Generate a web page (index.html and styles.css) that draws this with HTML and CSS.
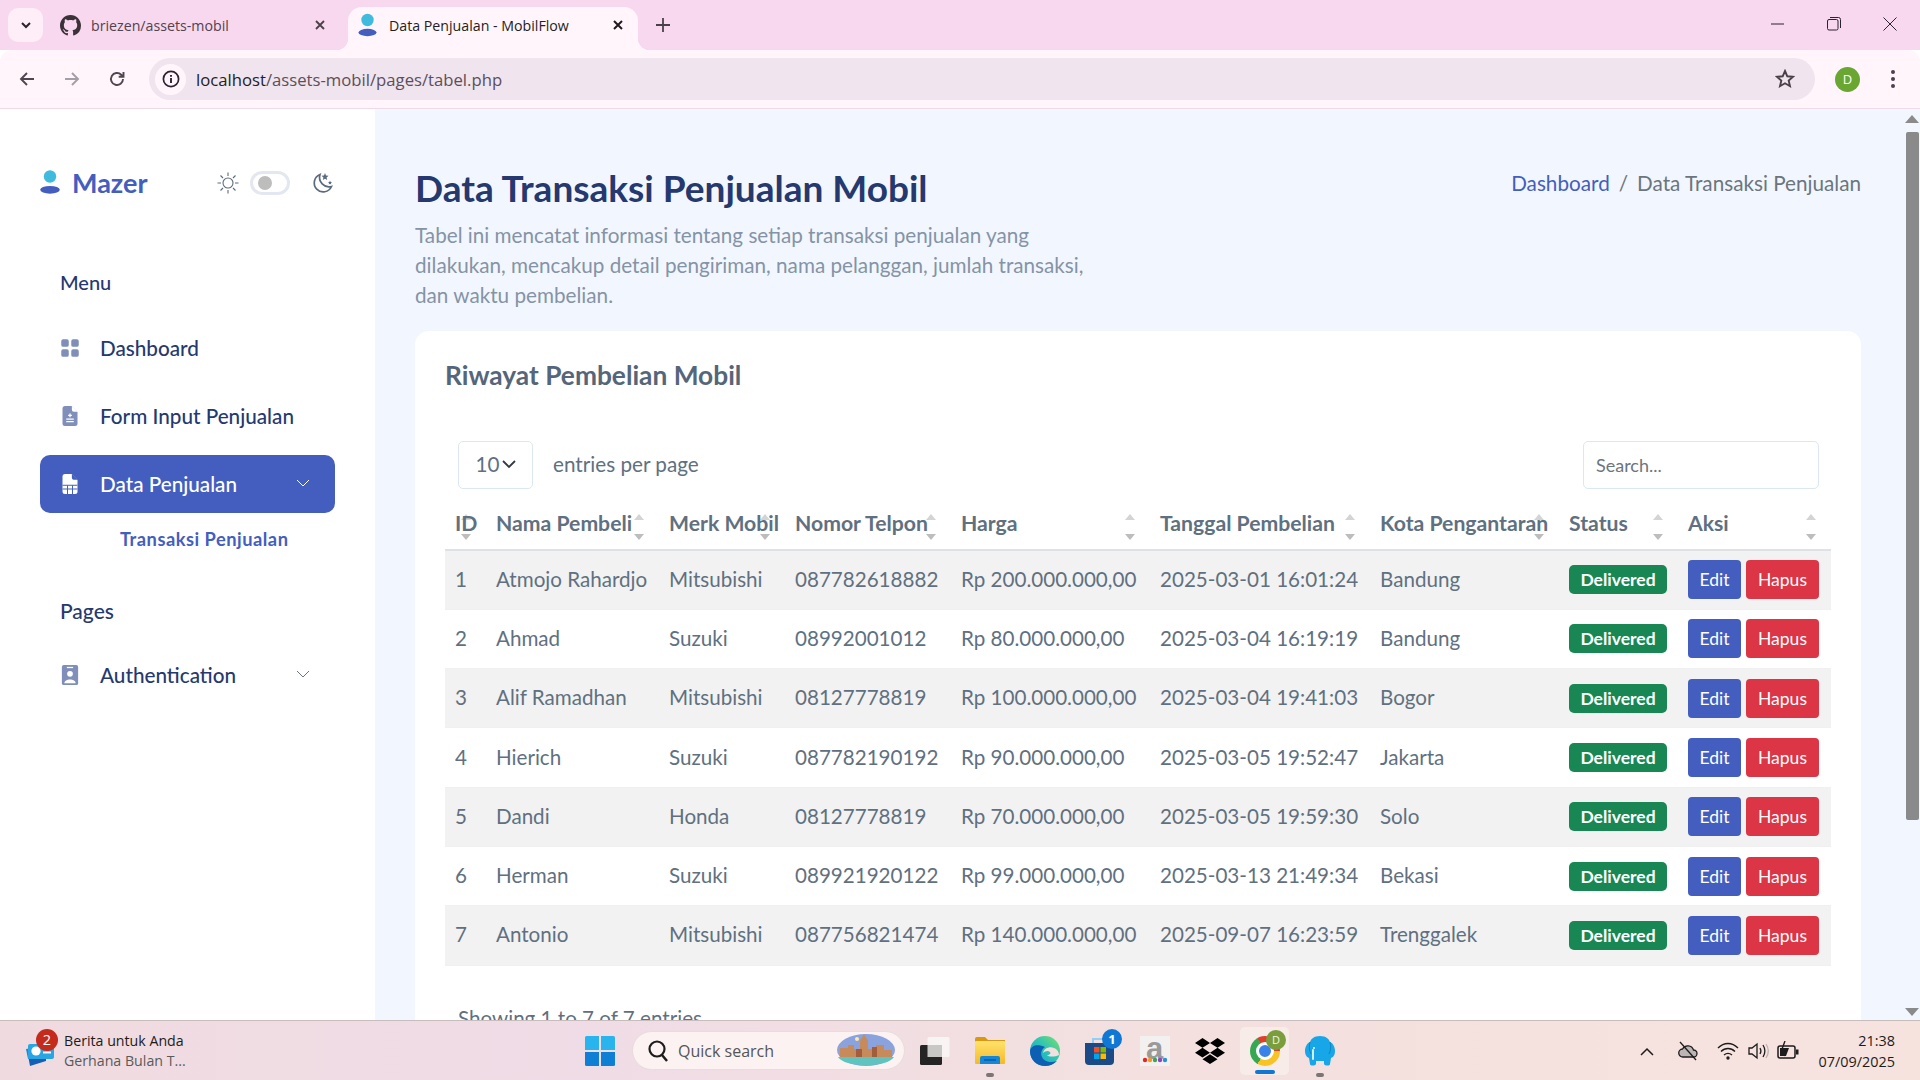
FILE: index.html
```html
<!DOCTYPE html>
<html lang="en">
<head>
  <meta charset="UTF-8">
  <title>Data Penjualan - MobilFlow</title>
  <link rel="stylesheet" href="styles.css">
</head>
<body>
  <div class="screen">
    <!-- browser chrome -->
    <div class="tabstrip">
      <button class="tab-search"><svg width="14" height="14" viewBox="0 0 14 14"><path d="M3 5l4 4 4-4" fill="none" stroke="#2b2330" stroke-width="2"/></svg></button>
      <div class="tab">
        <svg class="tab-icon" width="21" height="21" viewBox="0 0 16 16"><path fill="#3a3238" d="M8 0C3.58 0 0 3.58 0 8c0 3.54 2.29 6.53 5.47 7.59.4.07.55-.17.55-.38 0-.19-.01-.82-.01-1.49-2.01.37-2.53-.49-2.69-.94-.09-.23-.48-.94-.82-1.13-.28-.15-.68-.52-.01-.53.63-.01 1.08.58 1.23.82.72 1.21 1.87.87 2.33.66.07-.52.28-.87.51-1.07-1.78-.2-3.64-.89-3.64-3.95 0-.87.31-1.59.82-2.15-.08-.2-.36-1.02.08-2.12 0 0 .67-.21 2.2.82.64-.18 1.32-.27 2-.27.68 0 1.36.09 2 .27 1.53-1.04 2.2-.82 2.2-.82.44 1.1.16 1.92.08 2.12.51.56.82 1.27.82 2.15 0 3.07-1.87 3.75-3.65 3.95.29.25.54.73.54 1.48 0 1.07-.01 1.93-.01 2.2 0 .21.15.46.55.38A8.013 8.013 0 0 0 16 8c0-4.42-3.58-8-8-8z"/></svg>
        <span class="tab-title">briezen/assets-mobil</span>
        <svg class="tab-close" width="12" height="12" viewBox="0 0 12 12"><path d="M2 2l8 8M10 2l-8 8" stroke="#4a4048" stroke-width="1.8"/></svg>
      </div>
      <div class="tab tab-active">
        <svg class="tab-icon" width="19" height="24" viewBox="0 0 19 24"><circle cx="9.5" cy="7" r="6.2" fill="#41bbdd"/><ellipse cx="9.5" cy="19.5" rx="9" ry="3.7" fill="#435ebe"/></svg>
        <span class="tab-title">Data Penjualan - MobilFlow</span>
        <svg class="tab-close" width="12" height="12" viewBox="0 0 12 12"><path d="M2 2l8 8M10 2l-8 8" stroke="#1f1a1f" stroke-width="2"/></svg>
      </div>
      <svg class="tab-new" width="16" height="16" viewBox="0 0 16 16"><path d="M8 1v14M1 8h14" stroke="#4a4048" stroke-width="1.8"/></svg>
      <div class="window-controls">
        <svg width="14" height="14" viewBox="0 0 14 14"><path d="M0 7h13" stroke="#2b2330" stroke-width="1"/></svg>
        <svg width="14" height="14" viewBox="0 0 14 14"><rect x=".5" y="2.5" width="10.5" height="10.5" rx="1.5" fill="none" stroke="#2b2330"/><path d="M3 .5h8.5a2 2 0 0 1 2 2V11" fill="none" stroke="#2b2330"/></svg>
        <svg width="14" height="14" viewBox="0 0 14 14"><path d="M.5.5l13 13M13.5.5l-13 13" stroke="#2b2330" stroke-width="1"/></svg>
      </div>
    </div>
    <div class="toolbar">
      <svg class="nav-icon" width="18" height="18" viewBox="0 0 18 18"><path d="M16 9H3M9 3L3 9l6 6" fill="none" stroke="#4f4650" stroke-width="1.9"/></svg>
      <svg class="nav-icon" width="18" height="18" viewBox="0 0 18 18"><path d="M2 9h13M9 3l6 6-6 6" fill="none" stroke="#a69ea6" stroke-width="1.9"/></svg>
      <svg class="nav-icon" width="18" height="18" viewBox="0 0 18 18"><path d="M15 9a6 6 0 1 1-1.8-4.3L15 6.5M15.5 2v4.8h-4.8" fill="none" stroke="#4f4650" stroke-width="1.9"/></svg>
      <div class="omnibox">
        <span class="site-info"><svg width="18" height="18" viewBox="0 0 18 18"><circle cx="9" cy="9" r="7.6" fill="none" stroke="#2b2330" stroke-width="1.7"/><path d="M9 8v5M9 5v1.8" stroke="#2b2330" stroke-width="1.9"/></svg></span>
        <span class="url"><span class="url-host">localhost</span>/assets-mobil/pages/tabel.php</span>
        <svg class="star" width="20" height="20" viewBox="0 0 20 20"><path d="M10 2l2.3 5.3 5.7.5-4.3 3.8 1.3 5.6L10 14.3l-5 2.9 1.3-5.6L2 7.8l5.7-.5z" fill="none" stroke="#4a4048" stroke-width="1.9"/></svg>
      </div>
      <span class="avatar">D</span>
      <svg class="kebab" width="6" height="20" viewBox="0 0 6 20"><circle cx="3" cy="3" r="2" fill="#4f3f4f"/><circle cx="3" cy="10" r="2" fill="#4f3f4f"/><circle cx="3" cy="17" r="2" fill="#4f3f4f"/></svg>
    </div>

    <!-- page -->
    <div class="viewport">
      <aside class="sidebar">
        <div class="sidebar-head">
          <div class="logo">
            <svg width="20" height="24" viewBox="0 0 20 24"><circle cx="10" cy="6.5" r="6.2" fill="#41bbdd"/><ellipse cx="10" cy="19.8" rx="9.8" ry="3.9" fill="#435ebe"/></svg>
            <span>Mazer</span>
          </div>
          <div class="theme-toggle">
            <svg width="24" height="24" viewBox="0 0 24 24" fill="none" stroke="#5b6b7f" stroke-width="1.1"><circle cx="12" cy="12" r="5"/><path d="M12 1.5V5M12 19v3.5M1.5 12H5M19 12h3.5M4.500 4.500L7 7M17 17l2.500 2.500M4.500 19.500L7 17M17 7l2.500-2.500"/></svg>
            <span class="switch"><span class="knob"></span></span>
            <svg class="moon" width="22" height="22" viewBox="0 0 22 22"><path d="M9 2.5a9 9 0 1 0 11.500 12 9.500 9.500 0 0 1-11.500-12z" fill="none" stroke="#5b6b7f" stroke-width="1.7"/><path d="M14 1l1 2.500 2.500.3-1.900 1.700.6 2.500L14 6.700l-2.200 1.300.6-2.500-1.900-1.700 2.500-.3zM19 8.500l.6 1.400 1.400.2-1 1 .2 1.400-1.200-.7-1.200.7.2-1.400-1-1 1.400-.2z" fill="#5b6b7f"/></svg>
          </div>
        </div>
        <div class="menu-title">Menu</div>
        <ul class="menu">
          <li class="menu-item">
            <svg width="20" height="20" viewBox="0 0 16 16"><path fill="#7f8fb9" d="M1 2.500A1.500 1.500 0 0 1 2.500 1h3A1.500 1.500 0 0 1 7 2.500v3A1.500 1.500 0 0 1 5.500 7h-3A1.500 1.500 0 0 1 1 5.500v-3zm8 0A1.500 1.500 0 0 1 10.500 1h3A1.500 1.500 0 0 1 15 2.500v3A1.500 1.500 0 0 1 13.500 7h-3A1.500 1.500 0 0 1 9 5.500v-3zm-8 8A1.500 1.500 0 0 1 2.500 9h3A1.500 1.500 0 0 1 7 10.500v3A1.500 1.500 0 0 1 5.500 15h-3A1.500 1.500 0 0 1 1 13.500v-3zm8 0A1.500 1.500 0 0 1 10.500 9h3a1.500 1.500 0 0 1 1.500 1.500v3a1.500 1.500 0 0 1-1.500 1.500h-3A1.500 1.500 0 0 1 9 13.500v-3z"/></svg>
            <span>Dashboard</span>
          </li>
          <li class="menu-item">
            <svg width="20" height="20" viewBox="0 0 16 16"><path fill="#7f8fb9" d="M4 0h5.300L14 4.700V14a2 2 0 0 1-2 2H4a2 2 0 0 1-2-2V2a2 2 0 0 1 2-2z"/><path d="M9.500 0v3a1.500 1.500 0 0 0 1.500 1.500h3" fill="#fff"/><path d="M5 12.500h6M5 10.500h6M6.500 7.500h3M8 6v3" stroke="#fff" stroke-width="1"/></svg>
            <span>Form Input Penjualan</span>
          </li>
          <li class="menu-item menu-item-active">
            <svg width="20" height="20" viewBox="0 0 16 16"><path fill="#fff" d="M4 0h5.300L14 4.700V14a2 2 0 0 1-2 2H4a2 2 0 0 1-2-2V2a2 2 0 0 1 2-2z"/><path d="M9.500 0v3a1.500 1.500 0 0 0 1.500 1.500h3z" fill="#435ebe"/><path d="M2 9h12M2 12h12M6 9v7M10 9v7" stroke="#435ebe" stroke-width=".8"/></svg>
            <span>Data Penjualan</span>
            <svg class="caret" width="14" height="8" viewBox="0 0 14 8"><path d="M1 1l6 6 6-6" fill="none" stroke="#fff" stroke-width="1"/></svg>
          </li>
        </ul>
        <div class="submenu-item">Transaksi Penjualan</div>
        <div class="menu-title menu-title-pages">Pages</div>
        <ul class="menu">
          <li class="menu-item">
            <svg width="20" height="20" viewBox="0 0 16 16"><rect x="1.5" y="0" width="13" height="16" rx="1.5" fill="#7f8fb9"/><rect x="5.5" y="1.5" width="5" height="1" fill="#fff"/><circle cx="8" cy="7" r="2.3" fill="#fff"/><path d="M3.500 14.500c0-4 9-4 9 0z" fill="#fff"/></svg>
            <span>Authentication</span>
            <svg class="caret" width="14" height="8" viewBox="0 0 14 8"><path d="M1 1l6 6 6-6" fill="none" stroke="#6c757d" stroke-width="1"/></svg>
          </li>
        </ul>
      </aside>

      <main class="content">
        <div class="page-heading">
          <div class="page-intro">
            <h1>Data Transaksi Penjualan Mobil</h1>
            <p>Tabel ini mencatat informasi tentang setiap transaksi penjualan yang dilakukan, mencakup detail pengiriman, nama pelanggan, jumlah transaksi, dan waktu pembelian.</p>
          </div>
          <nav class="breadcrumb"><a>Dashboard</a><span class="sep">/</span><span>Data Transaksi Penjualan</span></nav>
        </div>

        <section class="card">
          <h2>Riwayat Pembelian Mobil</h2>
          <div class="table-top">
            <div class="per-page">
              <span class="selector">10<svg width="14" height="9" viewBox="0 0 14 9"><path d="M1 1l6 6 6-6" fill="none" stroke="#343a40" stroke-width="1.8"/></svg></span>
              <span>entries per page</span>
            </div>
            <input class="search" type="text" placeholder="Search...">
          </div>
          <table class="sales">
            <colgroup>
              <col class="c-id"><col class="c-name"><col class="c-brand"><col class="c-phone"><col class="c-price"><col class="c-date"><col class="c-city"><col class="c-status"><col class="c-action">
            </colgroup>
            <thead>
              <tr><th>ID</th><th>Nama Pembeli</th><th>Merk Mobil</th><th>Nomor Telpon</th><th>Harga</th><th>Tanggal Pembelian</th><th>Kota Pengantaran</th><th>Status</th><th>Aksi</th></tr>
            </thead>
            <tbody>
              <tr><td>1</td><td>Atmojo Rahardjo</td><td>Mitsubishi</td><td>087782618882</td><td>Rp 200.000.000,00</td><td>2025-03-01 16:01:24</td><td>Bandung</td><td><span class="badge">Delivered</span></td><td><a class="btn btn-edit">Edit</a><a class="btn btn-del">Hapus</a></td></tr>
              <tr><td>2</td><td>Ahmad</td><td>Suzuki</td><td>08992001012</td><td>Rp 80.000.000,00</td><td>2025-03-04 16:19:19</td><td>Bandung</td><td><span class="badge">Delivered</span></td><td><a class="btn btn-edit">Edit</a><a class="btn btn-del">Hapus</a></td></tr>
              <tr><td>3</td><td>Alif Ramadhan</td><td>Mitsubishi</td><td>08127778819</td><td>Rp 100.000.000,00</td><td>2025-03-04 19:41:03</td><td>Bogor</td><td><span class="badge">Delivered</span></td><td><a class="btn btn-edit">Edit</a><a class="btn btn-del">Hapus</a></td></tr>
              <tr><td>4</td><td>Hierich</td><td>Suzuki</td><td>087782190192</td><td>Rp 90.000.000,00</td><td>2025-03-05 19:52:47</td><td>Jakarta</td><td><span class="badge">Delivered</span></td><td><a class="btn btn-edit">Edit</a><a class="btn btn-del">Hapus</a></td></tr>
              <tr><td>5</td><td>Dandi</td><td>Honda</td><td>08127778819</td><td>Rp 70.000.000,00</td><td>2025-03-05 19:59:30</td><td>Solo</td><td><span class="badge">Delivered</span></td><td><a class="btn btn-edit">Edit</a><a class="btn btn-del">Hapus</a></td></tr>
              <tr><td>6</td><td>Herman</td><td>Suzuki</td><td>089921920122</td><td>Rp 99.000.000,00</td><td>2025-03-13 21:49:34</td><td>Bekasi</td><td><span class="badge">Delivered</span></td><td><a class="btn btn-edit">Edit</a><a class="btn btn-del">Hapus</a></td></tr>
              <tr><td>7</td><td>Antonio</td><td>Mitsubishi</td><td>087756821474</td><td>Rp 140.000.000,00</td><td>2025-09-07 16:23:59</td><td>Trenggalek</td><td><span class="badge">Delivered</span></td><td><a class="btn btn-edit">Edit</a><a class="btn btn-del">Hapus</a></td></tr>
            </tbody>
          </table>
          <div class="table-info">Showing 1 to 7 of 7 entries</div>
        </section>
      </main>

      <div class="scrollbar">
        <span class="arrow-up"></span>
        <span class="thumb"></span>
        <span class="arrow-down"></span>
      </div>
    </div>

    <!-- windows taskbar -->
    <footer class="taskbar">
      <div class="news">
        <span class="news-icon">
          <svg width="32" height="34" viewBox="0 0 32 34"><path d="M16 6a5 5 0 0 1 9 0v6h-9z" fill="#4caf6a"/><path d="M3 17l19-3v14L6 33z" fill="#155fb5"/><path d="M2 16l24-4v3L4 26z" fill="#1f86d8"/><rect x="4" y="11" width="26" height="15" rx="2" fill="#2aa5e4"/><circle cx="12" cy="18" r="4.6" fill="#fff"/><path d="M19 15.500h8M19 19.500h8" stroke="#e6f6ff" stroke-width="2"/></svg>
          <span class="news-count">2</span>
        </span>
        <span class="news-text"><b>Berita untuk Anda</b><small>Gerhana Bulan T...</small></span>
      </div>
      <div class="dock">
        <span class="dock-slot">
          <svg width="30" height="30" viewBox="0 0 30 30"><path d="M0 1.500A1.500 1.500 0 0 1 1.500 0H14v14H0z" fill="#29b4ee"/><path d="M16 0h12.500A1.500 1.500 0 0 1 30 1.500V14H16z" fill="#29b4ee"/><path d="M0 16h14v14H1.500A1.500 1.500 0 0 1 0 28.500z" fill="#0f7fd6"/><path d="M16 16h14v12.500a1.500 1.500 0 0 1-1.500 1.500H16z" fill="#0f7fd6"/></svg>
        </span>
        <div class="quick-search">
          <svg width="22" height="24" viewBox="0 0 22 24"><circle cx="10" cy="10" r="7.5" fill="none" stroke="#1c1c1c" stroke-width="2.2"/><path d="M15 16l5 6" stroke="#1c1c1c" stroke-width="2.5"/></svg>
          <span>Quick search</span>
          <svg class="search-art" width="60" height="36" viewBox="0 0 60 36"><ellipse cx="30" cy="17" rx="29" ry="16" fill="#8aa2dd"/><path d="M4 24V15h8v-3h6v4h6V8l4-7 4 7v8h8v-4h8v5h8v7z" fill="#c78a5a"/><path d="M20 16h6v8h-6zM36 14h5v10h-5z" fill="#a35c3c"/><path d="M2 24h56q-6 8-28 8T2 24z" fill="#5fc3c0"/><circle cx="21" cy="6" r="2" fill="#ffe9a8"/></svg>
        </div>
        <span class="dock-slot">
          <svg width="30" height="28" viewBox="0 0 30 28"><rect x="7.5" y="0" width="22" height="20" rx="1.5" fill="#f8f4f4"/><rect x="0" y="8" width="22" height="20" rx="1.5" fill="#242424"/><rect x="7.5" y="8" width="14.5" height="12" fill="#c9c6c6"/></svg>
        </span>
        <span class="dock-slot dock-open">
          <svg width="30" height="27" viewBox="0 0 30 27"><defs><linearGradient id="folderBody" x1="0" y1="0" x2="0" y2="1"><stop offset="0" stop-color="#ffe36e"/><stop offset="1" stop-color="#f6b926"/></linearGradient></defs><path d="M0 2a2 2 0 0 1 2-2h8l3 3h17v5H0z" fill="#d9980f"/><rect x="0" y="4" width="30" height="23" rx="1" fill="url(#folderBody)"/><path d="M5 27v-6a2 2 0 0 1 2-2h16a2 2 0 0 1 2 2v6z" fill="#1487d8"/><path d="M9 23h12" stroke="#0a4f8f" stroke-width="1.2"/></svg>
        </span>
        <span class="dock-slot">
          <svg width="30" height="30" viewBox="0 0 30 30"><defs><linearGradient id="edgeTop" x1="0" y1="1" x2="1" y2="0"><stop offset="0" stop-color="#1697d8"/><stop offset=".55" stop-color="#2fc4b2"/><stop offset="1" stop-color="#7fe06a"/></linearGradient></defs><circle cx="15" cy="15" r="15" fill="url(#edgeTop)"/><path d="M0 15c0 9 7 15 15 15 5 0 9-2 12-5-6 2-13 1-15-4-2-4 0-8 3-10C8 8 1 9 0 15z" fill="#0d5fb3"/><path d="M13 17c1-5 7-7 11-5 3 1 5 4 5 7-5 2-10 2-12 0 3 0 4-2 3-3-2-2-5-1-7 1z" fill="#f3e0de"/></svg>
        </span>
        <span class="dock-slot">
          <svg width="30" height="28" viewBox="0 0 30 28"><path d="M0 6h29v18a4 4 0 0 1-4 4H4a4 4 0 0 1-4-4z" fill="#1c4a86"/><path d="M8 6V2h10" fill="none" stroke="#8fd0f7" stroke-width="2"/><rect x="9" y="10" width="5.5" height="5.5" fill="#f25022"/><rect x="15.5" y="10" width="5.5" height="5.5" fill="#7fba00"/><rect x="9" y="16.5" width="5.5" height="5.5" fill="#00a4ef"/><rect x="15.5" y="16.5" width="5.5" height="5.5" fill="#ffb900"/></svg>
          <span class="dock-badge">1</span>
        </span>
        <span class="dock-slot">
          <span class="app-amazon">a<svg class="dots" width="26" height="6" viewBox="0 0 26 6"><circle cx="3" cy="3" r="2.2" fill="#e8232a"/><circle cx="8" cy="3" r="2.2" fill="#f59b23"/><circle cx="13" cy="3" r="2.2" fill="#3aa655"/><circle cx="18" cy="3" r="2.2" fill="#8e44c9"/><circle cx="23" cy="3" r="2.2" fill="#2a8fd6"/></svg></span>
        </span>
        <span class="dock-slot">
          <svg width="30" height="26" viewBox="0 0 32 32" preserveAspectRatio="none" fill="#000"><path d="M8 0l8 6-8 6-8-6zM24 0l8 6-8 6-8-6zM8 12l8 6-8 6-8-6zM24 12l8 6-8 6-8-6zM16 20l8 6-8 6-8-6z"/></svg>
        </span>
        <span class="dock-slot dock-current">
          <span class="app-chrome"><span class="chrome-eye"></span></span>
          <span class="chrome-badge">D</span>
        </span>
        <span class="dock-slot dock-open">
          <svg width="30" height="30" viewBox="0 0 30 30"><path d="M15 0C9 0 6 3 5 6 2 7 0 11 0 15c0 3 1 6 4 7l1 6c0 2 5 2 6 0v-3h8v3c1 2 6 2 6 0l1-6c3-1 4-4 4-7 0-4-2-8-5-9-1-3-4-6-10-6z" fill="#17a6e8"/><path d="M5 6c-1 4-1 8 1 12M25 6c1 4 1 8-1 12" fill="none" stroke="#0d86c4" stroke-width="1"/><path d="M8 14v9" stroke="#e8f7ff" stroke-width="1.8" stroke-linecap="round"/><circle cx="9" cy="12" r="1" fill="#e8f7ff"/></svg>
        </span>
      </div>
      <div class="tray">
        <svg class="tray-up" width="16" height="10" viewBox="0 0 16 10"><path d="M2 9l6-6 6 6" fill="none" stroke="#1c1c1c" stroke-width="1.5"/></svg>
        <svg class="tray-cloud" width="22" height="20" viewBox="0 0 22 20"><path d="M6 16a4 4 0 0 1-.5-8 6 6 0 0 1 11 1 3.500 3.500 0 0 1 0 7z" fill="#bdb5b5" stroke="#1c1c1c" stroke-width="1.3"/><path d="M3 1l16 18" stroke="#1c1c1c" stroke-width="1.3"/></svg>
        <svg class="tray-wifi" width="22" height="20" viewBox="0 0 22 20" fill="none" stroke="#1c1c1c" stroke-width="1.4"><path d="M1 7c6-6 14-6 20 0M4 10.500c4-4 10-4 14 0M7 14c2.500-2 5.500-2 8 0"/><circle cx="11" cy="17" r="1" fill="#1c1c1c"/></svg>
        <svg class="tray-sound" width="22" height="20" viewBox="0 0 22 20" fill="none" stroke="#1c1c1c" stroke-width="1.3"><path d="M2 7h3l5-4v14l-5-4H2z"/><path d="M13 7c1.200 2 1.200 4 0 6"/><path d="M16 4c2.500 4 2.500 8 0 12"/><path d="M19 3c3 4.500 3 9.500 0 14" stroke="#bcb2b2"/></svg>
        <svg class="tray-battery" width="22" height="20" viewBox="0 0 22 20"><rect x="1" y="5" width="17" height="12" rx="2" fill="none" stroke="#1c1c1c" stroke-width="1.5"/><path d="M3 15V7h9l-3 8z" fill="#1c1c1c"/><rect x="19" y="8.5" width="2.5" height="5" fill="#1c1c1c"/><path d="M8 0L5 8h5l-3 7" fill="none" stroke="#1c1c1c" stroke-width="1.4"/></svg>
        <div class="clock"><span>21:38</span><span>07/09/2025</span></div>
      </div>
    </footer>
  </div>
</body>
</html>
```

FILE: styles.css
```css
* {
  box-sizing: border-box;
}

html, body {
  margin: 0;
  height: 100%;
  overflow: hidden;
}

body {
  font-family: 'Lato', 'Noto Sans', sans-serif;
  color: #607080;
}

ul {
  list-style: none;
  margin: 0;
  padding: 0;
}

.screen {
  height: 1080px;
  display: flex;
  flex-direction: column;
}

/* browser chrome */
.tabstrip {
  height: 50px;
  flex: none;
  display: flex;
  align-items: flex-end;
  background: #f8d8ee;
  font-family: 'Open Sans', sans-serif;
  font-size: 14.2px;
}

.tab-search {
  width: 35px;
  height: 34px;
  margin: 0 0 8px 8px;
  padding: 0;
  border: none;
  border-radius: 10px;
  background: #fdeef8;
  display: flex;
  align-items: center;
  justify-content: center;
}

.tab {
  width: 290px;
  height: 43px;
  padding: 0 7px 7px 17px;
  display: flex;
  align-items: center;
  color: #51434f;
}

.tab-icon {
  flex: none;
  margin-right: 10px;
}

.tab-title {
  flex: 1;
  white-space: nowrap;
}

.tab-active {
  position: relative;
  margin-left: 15px;
  padding: 0 14px 7px 10px;
  width: 290px;
  background: #fff5fa;
  border-radius: 14px 14px 0 0;
  color: #241d24;
}

.tab-active .tab-icon {
  margin-right: 12px;
}

.tab-active::before,
.tab-active::after {
  content: "";
  position: absolute;
  bottom: 0;
  width: 12px;
  height: 12px;
}

.tab-active::before {
  left: -12px;
  background: radial-gradient(circle at 0 0, transparent 12px, #fff5fa 12.5px);
}

.tab-active::after {
  right: -12px;
  background: radial-gradient(circle at 100% 0, transparent 12px, #fff5fa 12.5px);
}

.tab-new {
  margin: 0 0 17px 17px;
}

.window-controls {
  margin-left: auto;
  display: flex;
  gap: 42px;
  padding: 0 23px 19px 0;
}

.toolbar {
  height: 59px;
  flex: none;
  display: flex;
  align-items: center;
  padding: 0 20px 0 18px;
  background: #fff5fa;
  border-radius: 12px 12px 0 0;
  border-bottom: 1px solid #eedae6;
}

.nav-icon {
  margin-right: 27px;
}

.omnibox {
  width: 1666px;
  height: 42px;
  margin: 0 20px 0 -4px;
  padding: 0 20px 0 6px;
  border-radius: 21px;
  background: #f0e4ee;
  display: flex;
  align-items: center;
  font-family: 'Open Sans', sans-serif;
  font-size: 16.7px;
  color: #5c4f5b;
}

.site-info {
  width: 31px;
  height: 31px;
  margin-right: 10px;
  border-radius: 50%;
  background: #fff5fa;
  display: flex;
  align-items: center;
  justify-content: center;
}

.url-host {
  color: #241d24;
}

.star {
  margin-left: auto;
}

.avatar {
  width: 25px;
  height: 25px;
  flex: none;
  border-radius: 50%;
  background: #6aa632;
  color: #fff;
  font-family: 'Open Sans', sans-serif;
  font-size: 13px;
  display: flex;
  align-items: center;
  justify-content: center;
}

.kebab {
  margin-left: 30px;
}

/* page */
.viewport {
  flex: 1;
  min-height: 0;
  display: flex;
  background: #f2f7ff;
  overflow: hidden;
}

.sidebar {
  width: 375px;
  flex: none;
  padding: 59px 40px 0;
  background: #fff;
  color: #25396f;
  font-size: 20.7px;
}

.sidebar-head {
  height: 28px;
  display: flex;
  align-items: center;
  justify-content: space-between;
  padding-right: 2px;
}

.logo {
  display: flex;
  align-items: center;
  gap: 12px;
  font-size: 27px;
  font-weight: 700;
  color: #435ebe;
}

.theme-toggle {
  display: flex;
  align-items: center;
  gap: 10px;
  position: relative;
  top: 1px;
}

.moon {
  margin-left: 11px;
}

.switch {
  width: 40px;
  height: 24px;
  padding: 4px 5px;
  border: 3px solid #e3e7ef;
  border-radius: 12px;
  background: #fff;
  display: flex;
  align-items: center;
}

.knob {
  width: 14px;
  height: 14px;
  border-radius: 50%;
  background: #bdbdbd;
}

.menu-title {
  margin: 72px 0 23px 20px;
  line-height: 28px;
  font-size: 20px;
  font-weight: 500;
}

.menu-item {
  height: 58px;
  margin-bottom: 10px;
  padding: 0 20px 0 20px;
  display: flex;
  align-items: center;
  gap: 20px;
  border-radius: 10px;
  font-weight: 500;
}

.menu-item-active {
  background: #435ebe;
  color: #fff;
}

.caret {
  margin-left: auto;
  margin-right: 5px;
  margin-bottom: 2px;
}

.submenu-item {
  margin: 14px 0 0 80px;
  line-height: 24px;
  font-size: 18.3px;
  font-weight: 700;
  letter-spacing: .5px;
  color: #435ebe;
}

.menu-title-pages {
  margin-top: 46px;
  margin-bottom: 21px;
  font-size: 21px;
}

.content {
  width: 1529px;
  flex: none;
  padding: 40px 43px 0 40px;
}

.page-heading {
  display: flex;
  justify-content: space-between;
  align-items: flex-start;
  height: 182px;
}

.page-intro {
  width: 690px;
}

h1 {
  margin: 18px 0 11px;
  font-size: 37px;
  line-height: 42px;
  font-weight: 700;
  color: #25396f;
  white-space: nowrap;
}

.page-intro p {
  margin: 0;
  font-size: 20.7px;
  line-height: 30px;
  color: #8593a6;
}

.breadcrumb {
  padding-top: 19px;
  font-size: 20.7px;
  line-height: 30px;
  color: #6c757d;
}

.breadcrumb a {
  color: #435ebe;
}

.sep {
  margin: 0 9px;
}

.card {
  height: 800px;
  padding: 29px 30px 30px;
  background: #fff;
  border-radius: 14px;
}

h2 {
  margin: 0;
  font-size: 26.3px;
  line-height: 30px;
  font-weight: 700;
  color: #55657a;
}

.table-top {
  margin-top: 51px;
  padding: 0 12px 0 13px;
  height: 48px;
  display: flex;
  align-items: center;
  justify-content: space-between;
  font-size: 20.7px;
}

.per-page {
  display: flex;
  align-items: center;
  gap: 20px;
}

.selector {
  width: 75px;
  height: 48px;
  padding-bottom: 2px;
  border: 1px solid #dce7f1;
  border-radius: 5px;
  display: flex;
  align-items: center;
  justify-content: center;
  gap: 2px;
  color: #607080;
}

.per-page > span:last-child {
  padding-bottom: 2px;
}

.search {
  width: 236px;
  height: 48px;
  padding: 0 12px;
  border: 1px solid #dce7f1;
  border-radius: 5px;
  font-family: inherit;
  font-size: 18px;
  color: #607080;
}

.search::placeholder {
  color: #6c757d;
}

.sales {
  width: 1386px;
  table-layout: fixed;
  border-collapse: collapse;
  isolation: isolate;
  font-size: 20.6px;
}

.c-id { width: 41px; }
.c-name { width: 173px; }
.c-brand { width: 126px; }
.c-phone { width: 166px; }
.c-price { width: 199px; }
.c-date { width: 220px; }
.c-city { width: 189px; }
.c-status { width: 119px; }
.c-action { width: 153px; }

.sales th {
  position: relative;
  height: 61px;
  padding: 7px 10px 0;
  border-bottom: 2px solid #dee2e6;
  text-align: left;
  white-space: nowrap;
  font-size: 21.2px;
  font-weight: 700;
  color: #607080;
}

.sales th::before,
.sales th::after {
  content: "";
  position: absolute;
  z-index: -1;
  right: 15px;
  border-left: 5px solid transparent;
  border-right: 5px solid transparent;
}

.sales th::before {
  top: 25px;
  border-bottom: 6px solid #d4d4d4;
}

.sales th::after {
  top: 45px;
  border-top: 6px solid #bdbdbd;
}

.sales td {
  height: 59.3px;
  padding: 0 10px;
  border-bottom: 1px solid #f0f0f0;
  white-space: nowrap;
}

.sales td:nth-child(-n+7) {
  padding-bottom: 2px;
}

.sales tbody tr:nth-child(odd) td {
  background: #f2f2f2;
}

.badge {
  display: block;
  width: 98px;
  height: 29px;
  border-radius: 5px;
  background: #198754;
  color: #fff;
  font-size: 17.5px;
  font-weight: 700;
  line-height: 29px;
  text-align: center;
}

.btn {
  display: inline-block;
  height: 39px;
  border-radius: 4px;
  color: #fff;
  font-size: 17.5px;
  line-height: 39px;
  text-align: center;
  vertical-align: middle;
}

.btn-edit {
  width: 53px;
  background: #435ebe;
}

.btn-del {
  width: 73px;
  margin-left: 5px;
  background: #dc3545;
}

.table-info {
  margin: 37px 13px 0;
  font-size: 20.6px;
  line-height: 30px;
}

/* fake scrollbar at the right edge */
.scrollbar {
  width: 16px;
  flex: none;
  position: relative;
  display: flex;
  flex-direction: column;
  align-items: center;
  background: #f2f7ff;
}

.arrow-up,
.arrow-down {
  width: 0;
  height: 0;
  border-left: 7px solid transparent;
  border-right: 7px solid transparent;
}

.arrow-up {
  margin-top: 6px;
  border-bottom: 8px solid #8a8a8a;
}

.arrow-down {
  margin-bottom: 4px;
  border-top: 8px solid #8a8a8a;
}

.thumb {
  width: 13px;
  height: 688px;
  margin: 9px 0 auto;
  background: #8a8a8a;
  border-radius: 2px;
}

/* taskbar */
.taskbar {
  height: 60px;
  flex: none;
  display: flex;
  align-items: center;
  border-top: 1px solid #c8bcbc;
  background: linear-gradient(90deg, #efdbdf 0%, #f0dce6 30%, #f3e0df 60%, #f7e3de 100%);
  font-family: 'Open Sans', sans-serif;
  color: #1c1c1c;
}

.news {
  width: 572px;
  flex: none;
  display: flex;
  align-items: center;
  padding-left: 24px;
}

.news-icon {
  position: relative;
  width: 40px;
  height: 36px;
  display: block;
}

.news-count {
  position: absolute;
  top: -4px;
  left: 12px;
  width: 22px;
  height: 22px;
  border-radius: 50%;
  background: #c42b1c;
  color: #fff;
  font-size: 14.5px;
  line-height: 22px;
  text-align: center;
}

.news-text {
  display: flex;
  flex-direction: column;
  font-size: 14.2px;
  line-height: 20px;
}

.news-text b {
  font-weight: 400;
}

.news-text small {
  font-size: 14.2px;
  color: #5a5a5a;
}

.dock {
  display: flex;
  align-items: center;
}

.dock-slot {
  position: relative;
  width: 55px;
  height: 50px;
  display: flex;
  align-items: center;
  justify-content: center;
}

.quick-search {
  width: 273px;
  height: 39px;
  margin-left: 5px;
  margin-right: 2px;
  padding: 0 8px 0 14px;
  display: flex;
  align-items: center;
  gap: 9px;
  border-radius: 20px;
  background: #fbf2f1;
  border: 1px solid #e8dcdc;
  font-size: 16px;
  color: #555;
}

.search-art {
  margin-left: auto;
}

.dock-open::after {
  content: "";
  position: absolute;
  bottom: -1px;
  width: 8px;
  height: 4px;
  border-radius: 2px;
  background: #7d7575;
}

.dock-badge {
  position: absolute;
  top: 3px;
  right: 5px;
  width: 20px;
  height: 20px;
  border-radius: 50%;
  background: #0f78d4;
  color: #fff;
  font-size: 13px;
  font-weight: 700;
  line-height: 20px;
  text-align: center;
}

.app-amazon {
  position: relative;
  width: 30px;
  height: 30px;
  background: #f3f0f0;
  color: #9a9a9a;
  font-family: 'Liberation Sans', sans-serif;
  font-size: 31px;
  font-weight: 700;
  line-height: 26px;
  text-align: center;
}

.dots {
  position: absolute;
  left: 2px;
  bottom: 3px;
}

.dock-current {
  width: 49px;
  height: 48px;
  margin: 0 3px;
  background: #f8ece9;
  border-radius: 5px;
}

.dock-current::after {
  content: "";
  position: absolute;
  bottom: 1px;
  width: 20px;
  height: 4px;
  border-radius: 2px;
  background: #0f78d4;
}

.app-chrome {
  width: 30px;
  height: 30px;
  border-radius: 50%;
  background: conic-gradient(from -30deg, #e0402a 0 120deg, #f7c325 120deg 240deg, #36a852 240deg 360deg);
  display: flex;
  align-items: center;
  justify-content: center;
}

.chrome-eye {
  width: 18px;
  height: 18px;
  border-radius: 50%;
  background: #3b82e8;
  border: 3px solid #fff;
}

.chrome-badge {
  position: absolute;
  top: 3px;
  right: 3px;
  width: 20px;
  height: 20px;
  border-radius: 50%;
  background: #7a9e3c;
  color: #f2f6e6;
  font-size: 11px;
  line-height: 20px;
  text-align: center;
}

.tray {
  margin-left: auto;
  padding-right: 25px;
  display: flex;
  align-items: center;
}

.tray-cloud { margin-left: 22px; }
.tray-wifi { margin-left: 18px; }
.tray-sound { margin-left: 8px; }
.tray-battery { margin-left: 8px; }

.clock {
  margin-left: 20px;
  display: flex;
  flex-direction: column;
  align-items: flex-end;
  font-size: 14.4px;
  line-height: 21px;
}
```
